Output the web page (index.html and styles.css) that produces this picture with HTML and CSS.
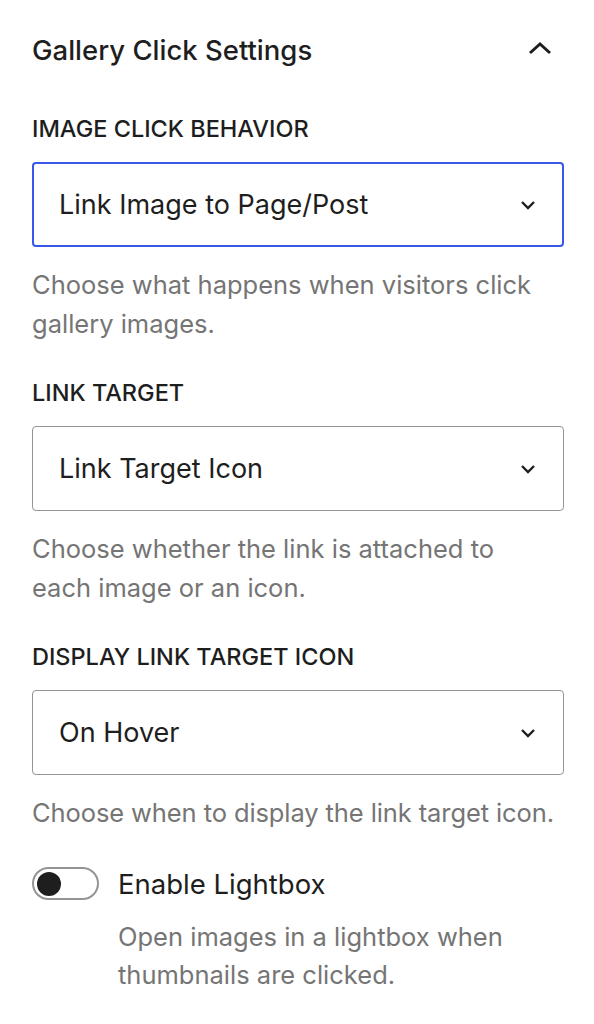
FILE: index.html
```html
<!DOCTYPE html>
<html lang="en">
<head>
  <meta charset="UTF-8" />
  <meta name="viewport" content="width=device-width, initial-scale=1.0"/>
  <title>Gallery Click Settings</title>
  <link rel="stylesheet" href="styles.css">
</head>
<body>
  <div class="panel">
    <div class="panel-header">
      <h2>Gallery Click Settings</h2>
      <svg class="chev-up" width="26" height="16" viewBox="0 0 26 16"><path d="M3 13 L13 4 L23 13" fill="none" stroke="#1e1e1e" stroke-width="3"/></svg>
    </div>

    <div class="field">
      <label>Image Click Behavior</label>
      <div class="select focused">
        <span>Link Image to Page/Post</span>
        <svg width="18" height="12" viewBox="0 0 18 12"><path d="M3 3 L9 9 L15 3" fill="none" stroke="#1e1e1e" stroke-width="2.4"/></svg>
      </div>
      <p class="help">Choose what happens when visitors click gallery images.</p>
    </div>

    <div class="field">
      <label>Link Target</label>
      <div class="select">
        <span>Link Target Icon</span>
        <svg width="18" height="12" viewBox="0 0 18 12"><path d="M3 3 L9 9 L15 3" fill="none" stroke="#1e1e1e" stroke-width="2.4"/></svg>
      </div>
      <p class="help">Choose whether the link is attached to each image or an icon.</p>
    </div>

    <div class="field">
      <label>Display Link Target Icon</label>
      <div class="select">
        <span>On Hover</span>
        <svg width="18" height="12" viewBox="0 0 18 12"><path d="M3 3 L9 9 L15 3" fill="none" stroke="#1e1e1e" stroke-width="2.4"/></svg>
      </div>
      <p class="help one-line">Choose when to display the link target icon.</p>
    </div>

    <div class="toggle-field">
      <div class="toggle-row">
        <span class="toggle"><span class="knob"></span></span>
        <span class="toggle-label">Enable Lightbox</span>
      </div>
      <p class="help indent">Open images in a lightbox when thumbnails are clicked.</p>
    </div>
  </div>
</body>
</html>
```

FILE: styles.css
```css
body {
  margin: 0;
  padding: 0;
  background: #fff;
  font-family: Inter, "Noto Sans", sans-serif;
  color: #1e1e1e;
}

.panel {
  padding: 0 30px 0 32px;
}

.panel-header {
  height: 100px;
  display: flex;
  justify-content: space-between;
  align-items: center;
}

.panel-header h2 {
  margin: 0;
  font-size: 27.5px;
  font-weight: 500;
}

.chev-up {
  margin-right: 11px;
  margin-top: -4px;
}

.field {
  margin-top: 13px;
  margin-bottom: 34px;
}

.field label {
  display: block;
  font-size: 23.5px;
  font-weight: 500;
  line-height: 31px;
  text-transform: uppercase;
  margin-bottom: 18px;
}

.select {
  height: 85px;
  box-sizing: border-box;
  border: 1px solid #949494;
  border-radius: 4px;
  display: flex;
  align-items: center;
  justify-content: space-between;
  padding: 0 26px 0 26px;
  font-size: 27px;
}

.select.focused {
  border: 2px solid #3858e9;
  padding: 0 25px;
}

.help {
  margin: 18px 0 0;
  max-width: 510px;
  font-size: 25.5px;
  line-height: 39px;
  color: #757575;
}

.help.one-line {
  max-width: none;
  white-space: nowrap;
  letter-spacing: -0.1px;
}

.toggle-field {
  margin-top: -2px;
}

.toggle-row {
  display: flex;
  align-items: center;
  gap: 19px;
  height: 39px;
}

.toggle {
  width: 67px;
  height: 33px;
  box-sizing: border-box;
  border: 2px solid #949494;
  border-radius: 17px;
  display: flex;
  align-items: center;
  padding-left: 3px;
}

.knob {
  width: 24px;
  height: 24px;
  border-radius: 50%;
  background: #1e1e1e;
}

.toggle-label {
  font-size: 27.5px;
}

.help.indent {
  margin-top: 15px;
  padding-left: 86px;
  max-width: 420px;
  font-size: 25.5px;
  line-height: 38px;
}
```
